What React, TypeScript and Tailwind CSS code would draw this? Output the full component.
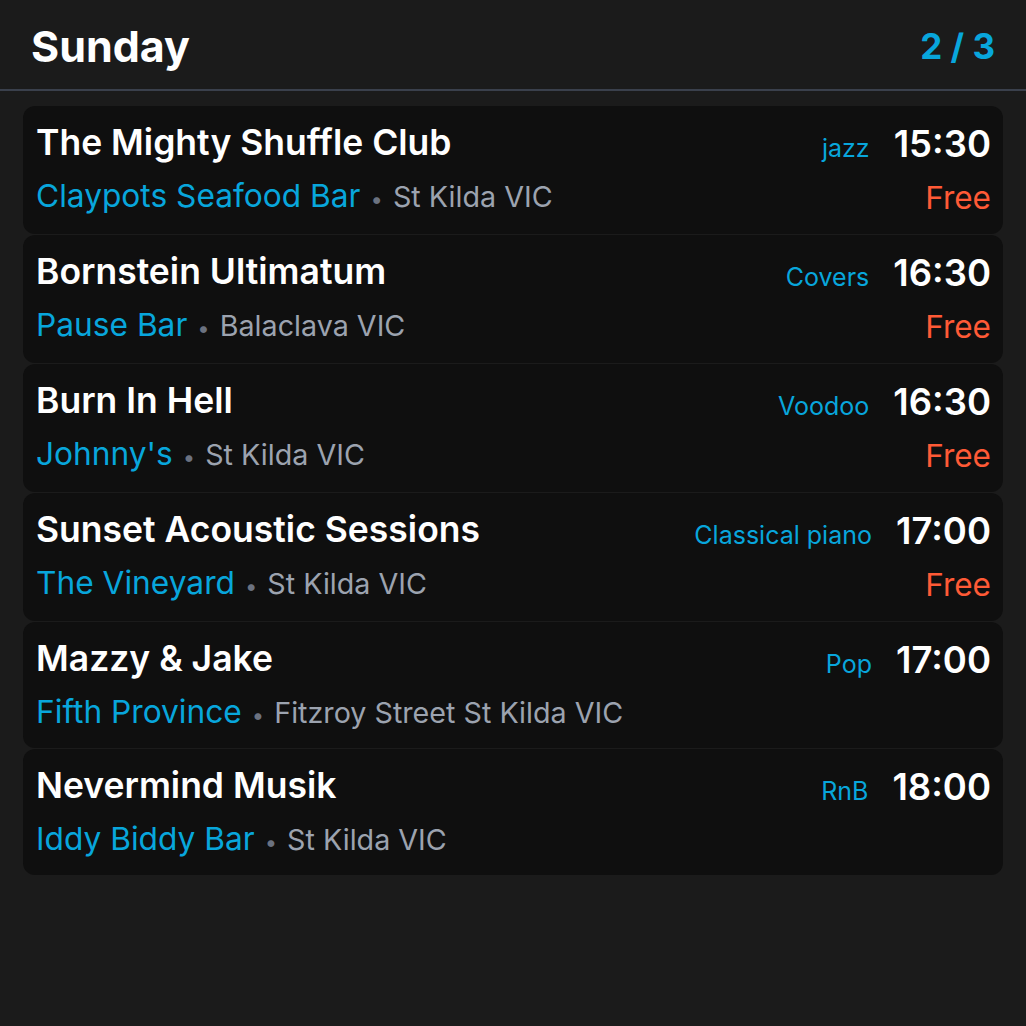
import React from "react";

type Gig = { title: string; genre: string; time: string; venue: string; loc: string; free: boolean };

const gigs: Gig[] = [
  { title: "The Mighty Shuffle Club", genre: "jazz", time: "15:30", venue: "Claypots Seafood Bar", loc: "St Kilda VIC", free: true },
  { title: "Bornstein Ultimatum", genre: "Covers", time: "16:30", venue: "Pause Bar", loc: "Balaclava VIC", free: true },
  { title: "Burn In Hell", genre: "Voodoo", time: "16:30", venue: "Johnny's", loc: "St Kilda VIC", free: true },
  { title: "Sunset Acoustic Sessions", genre: "Classical piano", time: "17:00", venue: "The Vineyard", loc: "St Kilda VIC", free: true },
  { title: "Mazzy & Jake", genre: "Pop", time: "17:00", venue: "Fifth Province", loc: "Fitzroy Street St Kilda VIC", free: false },
  { title: "Nevermind Musik", genre: "RnB", time: "18:00", venue: "Iddy Biddy Bar", loc: "St Kilda VIC", free: false },
];

export default function App() {
  return (
    <div className="w-[1026px] h-[1026px] bg-[#1b1b1b] overflow-hidden" style={{ fontFamily: "Inter, 'Noto Sans', sans-serif" }}>
      <div className="h-[91px] flex items-center justify-between pl-[31px] pr-[31px] border-b-2 border-[#3a404c]">
        <h1 className="text-[43px] font-bold text-white leading-none pt-[4px]">Sunday</h1>
        <div className="text-[35px] font-bold text-[#08a6dc] leading-none pt-[4px]">2 / 3</div>
      </div>
      <div className="px-[23px] pt-[15px] flex flex-col gap-[1px]">
        {gigs.map((g, i) => (
          <div key={i} className={`bg-[#0f0f0f] rounded-[12px] pl-[13px] pr-[12px] pt-[16px] ${g.free ? "pb-[19px]" : "pb-[17px]"}`}>
            <div className="flex items-baseline justify-between h-[40px]">
              <div className="text-[35.5px] font-semibold text-white leading-[40px]">{g.title}</div>
              <div className="flex items-baseline gap-[24px] translate-y-[2px]">
                <span className="text-[25px] text-[#08a6dc] leading-[40px]">{g.genre}</span>
                <span className="text-[36.5px] font-semibold text-white leading-[40px]">{g.time}</span>
              </div>
            </div>
            <div className="flex items-baseline justify-between h-[40px] mt-[13px]">
              <div className="flex items-baseline leading-[40px] translate-y-[1px]">
                <span className="text-[31.7px] text-[#08a6dc]">{g.venue}</span>
                <span className="text-[22px] text-[#6b7280] mx-[10px]">•</span>
                <span className="text-[28.7px] text-[#9ca3af]">{g.loc}</span>
              </div>
              {g.free && <span className="text-[31.5px] text-[#ff5a36] leading-[40px] translate-y-[3px]">Free</span>}
            </div>
          </div>
        ))}
      </div>
    </div>
  );
}
